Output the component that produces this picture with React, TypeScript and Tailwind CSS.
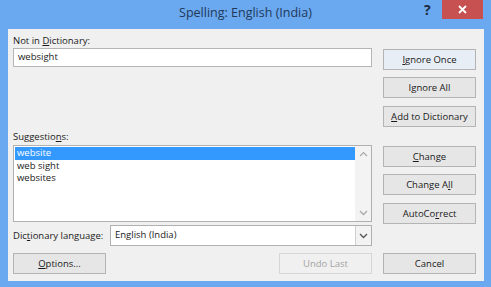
import React from "react";

const font = { fontFamily: '"Open Sans", "Noto Sans", sans-serif' };

function Btn({ children, className = "" }: { children: React.ReactNode; className?: string }) {
  return (
    <div
      className={`flex h-[21px] w-[93px] items-center justify-center border border-[#b4b4b4] bg-[#e6e6e6] text-[9.5px] leading-none text-[#1a1a1a] ${className}`}
    >
      {children}
    </div>
  );
}

function ChevronUp() {
  return (
    <svg width="9" height="6" viewBox="0 0 9 6">
      <path d="M1 5 L4.5 1.5 L8 5" fill="none" stroke="#a8a8a8" strokeWidth="1.1" />
    </svg>
  );
}
function ChevronDown({ color = "#a8a8a8" }: { color?: string }) {
  return (
    <svg width="9" height="6" viewBox="0 0 9 6">
      <path d="M1 1 L4.5 4.5 L8 1" fill="none" stroke={color} strokeWidth="1.3" />
    </svg>
  );
}

export default function App() {
  return (
    <div style={font} className="flex h-[287px] w-[491px] flex-col bg-[#6aa8ef]">
      {/* title bar */}
      <div className="relative flex h-[29px] shrink-0 items-start justify-center">
        <div className="pt-[4px] text-[12.5px] leading-[18px] text-[#22395a]">Spelling: English (India)</div>
        <div className="absolute left-[424px] top-[1px] text-[14px] font-bold leading-[18px] text-[#1c2c40]">?</div>
        <div className="absolute left-[442px] top-0 flex h-[19px] w-[41px] items-center justify-center bg-[#c75050]">
          <svg width="9" height="9" viewBox="0 0 9 9">
            <path d="M1 1 L8 8 M8 1 L1 8" stroke="#ffffff" strokeWidth="1.8" />
          </svg>
        </div>
      </div>
      {/* content */}
      <div className="ml-[8px] mr-[7px] flex h-[252px] w-[476px] flex-col bg-[#f0f0f0] pl-[5px] pr-[8px]">
        <div className="flex gap-[11px]">
          {/* left column */}
          <div className="flex w-[359px] flex-col">
            <div className="mt-[6px] h-[12px] text-[9.5px] leading-[12px] text-[#1a1a1a]">
              Not in <u>D</u>ictionary:
            </div>
            <div className="mt-[1px] flex h-[19px] items-center border border-[#b5b5b5] bg-white pl-[4px] text-[9.5px] text-[#1a1a1a]">
              websight
            </div>
            <div className="mt-[64px] h-[12px] text-[9.5px] leading-[12px] text-[#1a1a1a]">
              Suggestio<u>n</u>s:
            </div>
            <div className="mt-[2px] flex h-[77px] border border-[#b0b0b0] bg-white">
              <div className="flex flex-1 flex-col pl-[1px] pt-[1px] text-[9.5px] leading-[12.5px] text-[#1a1a1a]">
                <div className="bg-[#3399ff] pl-[2px] text-white">website</div>
                <div className="pl-[2px]">web sight</div>
                <div className="pl-[2px]">websites</div>
              </div>
              <div className="flex w-[16px] flex-col items-center justify-between bg-[#f3f3f3] py-[5px]">
                <ChevronUp />
                <ChevronDown />
              </div>
            </div>
            <div className="mt-[3px] flex items-center">
              <div className="w-[97px] text-[9.5px] leading-[12px] text-[#1a1a1a]">
                Dic<u>t</u>ionary language:
              </div>
              <div className="flex h-[21px] flex-1 items-center border border-[#b0b0b0] bg-white">
                <div className="flex-1 pl-[4px] text-[9.5px] text-[#1a1a1a]">English (India)</div>
                <div className="flex h-full w-[16px] items-center justify-center border-l border-[#d0d0d0] bg-[#f3f3f3]">
                  <ChevronDown color="#555555" />
                </div>
              </div>
            </div>
          </div>
          {/* right column */}
          <div className="flex w-[93px] flex-col pt-[20px]">
            <Btn className="border-[#7eb4ea] bg-[#e8eef5]">
              <u>I</u>gnore Once
            </Btn>
            <Btn className="mt-[7px]">
              I<u>g</u>nore All
            </Btn>
            <Btn className="mt-[8px]">
              <u>A</u>dd to Dictionary
            </Btn>
            <Btn className="mt-[19px]">
              <u>C</u>hange
            </Btn>
            <Btn className="mt-[7px]">
              Change A<u>l</u>l
            </Btn>
            <Btn className="mt-[8px]">
              AutoCo<u>r</u>rect
            </Btn>
          </div>
        </div>
        <div className="mt-[7px] flex items-center">
          <Btn>
            <u>O</u>ptions...
          </Btn>
          <div className="flex-1" />
          <Btn className="border-[#d6d6d6] bg-[#f0f0f0] text-[#a3a3a3]">Undo Last</Btn>
          <Btn className="ml-[11px]">Cancel</Btn>
        </div>
      </div>
    </div>
  );
}
